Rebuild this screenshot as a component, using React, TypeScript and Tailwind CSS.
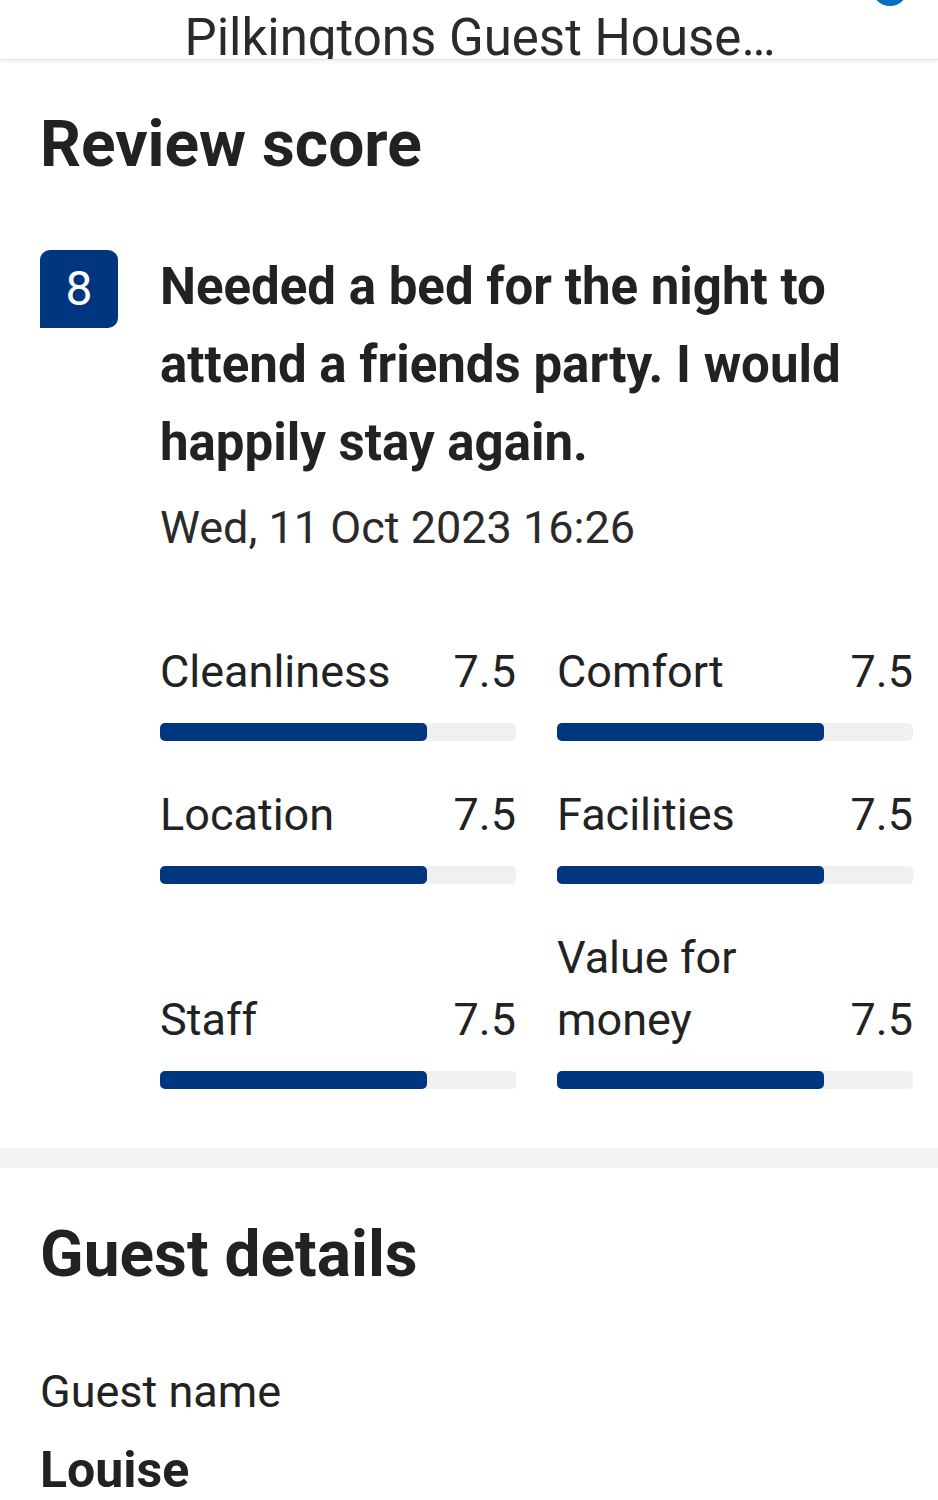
const scores = [
  { label: 'Cleanliness', value: 7.5 },
  { label: 'Comfort', value: 7.5 },
  { label: 'Location', value: 7.5 },
  { label: 'Facilities', value: 7.5 },
  { label: 'Staff', value: 7.5 },
  { label: 'Value for money', value: 7.5 },
];

function ScoreBar({ label, value }: { label: string; value: number }) {
  return (
    <div className="flex flex-col justify-end">
      <div className="flex items-end justify-between gap-4 text-[45px] leading-[62px]">
        <span className="max-w-[200px]">{label}</span>
        <span>{value.toFixed(1)}</span>
      </div>
      <div className="mt-5 h-[18px] w-full rounded-[5px] bg-[#f0f0f0]">
        <div className="h-full rounded-[5px] bg-[#003580]" style={{ width: `${value * 10}%` }} />
      </div>
    </div>
  );
}

export default function App() {
  return (
    <div
      className="min-h-[1500px] w-[938px] overflow-hidden bg-white text-[#222222]"
      style={{ fontFamily: 'Roboto, "Noto Sans", sans-serif' }}
    >
      {/* Header */}
      <header className="relative h-[60px] overflow-hidden border-b border-[#e4e4e4] shadow-[0_2px_4px_rgba(0,0,0,0.06)]">
        <div className="absolute right-[30px] -top-[30px] h-[36px] w-[36px] rounded-full bg-[#0071c2]" />
        <div className="flex justify-center pt-[10px] pl-[22px] text-[51px] leading-[56px] text-[#2a2a2a]">
          Pilkingtons Guest House…
        </div>
      </header>

      {/* Review score */}
      <section className="pl-10 pr-[25px] pt-[49px] pb-[59px]">
        <h2 className="text-[64px] font-bold leading-[72px]">Review score</h2>

        <div className="mt-[69px] flex gap-[42px]">
          <div className="flex h-[78px] w-[78px] shrink-0 items-center justify-center rounded-[10px] rounded-bl-none bg-[#003580] text-[48px] text-white">
            8
          </div>
          <div className="-mt-[2px] flex-1">
            <p className="text-[51px] font-bold leading-[78px]">
              Needed a bed for the night to attend a friends party. I would happily stay again.
            </p>
            <p className="mt-[18px] text-[45px] leading-[56px] text-[#2a2a2a]">Wed, 11 Oct 2023 16:26</p>

            <div className="mt-[85px] grid grid-cols-2 gap-x-[41px] gap-y-[43px]">
              {scores.map((s) => (
                <ScoreBar key={s.label} label={s.label} value={s.value} />
              ))}
            </div>
          </div>
        </div>
      </section>

      <div className="h-[20px] bg-[#f2f2f2]" />

      {/* Guest details */}
      <section className="px-10 pt-[51px]">
        <h2 className="text-[64px] font-bold leading-[72px]">Guest details</h2>
        <p className="mt-[73px] text-[45px] leading-[56px]">Guest name</p>
        <p className="mt-[22px] text-[50px] font-bold leading-[56px]">Louise</p>
      </section>
    </div>
  );
}
